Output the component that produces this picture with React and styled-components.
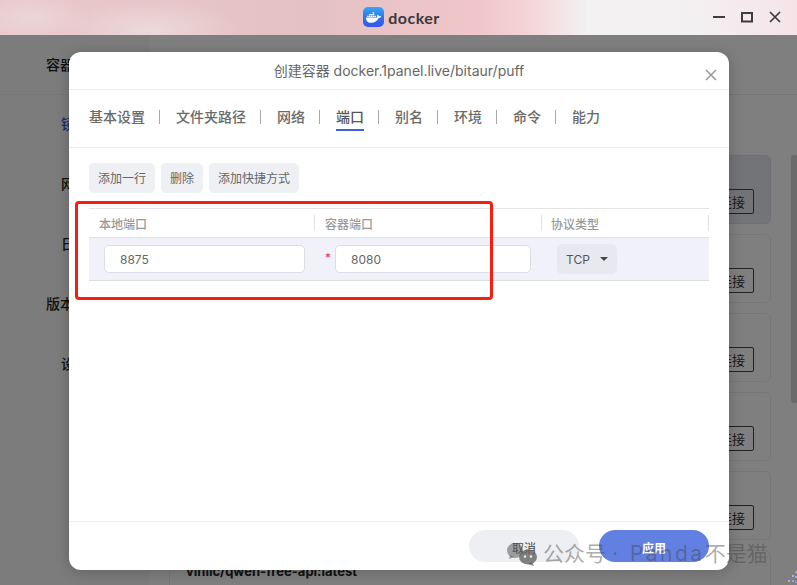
import React from "react";
import styled, { createGlobalStyle } from "styled-components";
import { FaDocker } from "react-icons/fa";

const FONT = `"Inter", "Noto Sans CJK SC", "Noto Sans", sans-serif`;

const Global = createGlobalStyle`
  html, body { margin: 0; padding: 0; background: #fff; }
  * { box-sizing: border-box; }
  body { font-family: ${FONT}; }
`;

const Screen = styled.div`
  position: relative;
  width: 797px;
  height: 585px;
  overflow: hidden;
  display: flex;
  flex-direction: column;
`;

const TitleBar = styled.header`
  height: 35px;
  flex: none;
  display: flex;
  align-items: center;
  justify-content: center;
  position: relative;
  padding-left: 6px;
  gap: 4px;
  background:
    radial-gradient(ellipse 90px 30px at 150px 30px, #ecd9db 0%, rgba(236,217,219,0) 100%),
    radial-gradient(ellipse 60px 24px at 30px 18px, #ecd6d8 0%, rgba(236,214,216,0) 100%),
    linear-gradient(90deg, #e9c8cb 0%, #e4c2c4 40%, #f0c6ca 60%, #f4d3d6 66%, #f3f2f3 74%, #f3f0f1 88%, #f5e3e8 100%);
`;

const LogoTile = styled.span`
  width: 21px;
  height: 20px;
  border-radius: 5px;
  display: flex;
  align-items: center;
  justify-content: center;
  color: #fff;
  font-size: 15px;
  margin-top: -1px;
  background: linear-gradient(180deg, #35a8f4 0%, #2f6df0 60%, #3a55ea 100%);
`;

const AppName = styled.span`
  font-family: "Lato", "Noto Sans", sans-serif;
  font-size: 16px;
  font-weight: 700;
  letter-spacing: 0.5px;
  color: #3a3a3c;
`;

const WindowControls = styled.div`
  position: absolute;
  top: 11px;
  right: 16px;
  display: flex;
  gap: 16px;
  color: #3d3d3d;
  svg { display: block; }
`;

const Main = styled.div`
  flex: 1;
  display: flex;
  min-height: 0;
  background: #fff;
`;

const Sidebar = styled.nav`
  width: 149px;
  flex: none;
  background: #f6f8f6;
`;

const SideItem = styled.div`
  height: 60px;
  display: flex;
  align-items: center;
  padding: 0 0 ${(p) => (p.$rule ? 2 : 4)}px ${(p) => (p.$group ? 46 : 61)}px;
  font-size: 14px;
  font-weight: 500;
  color: ${(p) => (p.$active ? "#3a55dd" : "#222")};
  border-bottom: ${(p) => (p.$rule ? "1px solid #f0f0f0" : "none")};
`;

const Content = styled.section`
  flex: 1;
  min-width: 0;
  position: relative;
`;

const ContentHead = styled.div`
  height: 60px;
  border-bottom: 1px solid #ededed;
`;

const CardList = styled.div`
  display: flex;
  flex-direction: column;
  gap: 10px;
  padding: 60px 26px 0 20px;
`;

const Card = styled.div`
  height: 69px;
  flex: none;
  border: 1px solid ${(p) => (p.$selected ? "#dcdfe9" : "#ececec")};
  border-radius: 6px;
  background: ${(p) => (p.$selected ? "#e6e8f0" : "#fff")};
  padding: 12px 16px;
  position: relative;
  font-size: 13px;
  font-weight: 700;
  color: #222;
`;

const ConnectButton = styled.span`
  position: absolute;
  top: 33px;
  right: 16px;
  width: 60px;
  height: 25px;
  border: 1px solid #444;
  border-radius: 2px;
  font-size: 13px;
  font-weight: 400;
  color: #333;
  display: flex;
  align-items: center;
  justify-content: flex-end;
  padding-right: 8px;
`;

const ScrollThumb = styled.div`
  position: absolute;
  top: 120px;
  right: 0;
  width: 6px;
  height: 248px;
  border-radius: 3px 0 0 3px;
  background: #d6d6d6;
`;

const Overlay = styled.div`
  position: absolute;
  inset: 35px 0 0 0;
  background: rgba(0, 0, 0, 0.5);
  padding: 17px 0 0 69px;
`;

const Modal = styled.div`
  width: 660px;
  height: 518px;
  background: #fff;
  border-radius: 12px;
  box-shadow: 0 2px 14px rgba(0, 0, 0, 0.22);
  display: flex;
  flex-direction: column;
  position: relative;
`;

const ModalHead = styled.div`
  height: 38px;
  flex: none;
  border-bottom: 1px solid #ececee;
  display: flex;
  align-items: center;
  justify-content: center;
  padding-bottom: 2px;
  font-size: 14px;
  color: #666;
  position: relative;
`;

const CloseGlyph = styled.svg`
  position: absolute;
  top: 17px;
  right: 12px;
  width: 12px;
  height: 12px;
`;

const Tabs = styled.div`
  height: 58px;
  flex: none;
  border-bottom: 1px solid #ececee;
  display: flex;
  align-items: center;
  padding: 0 0 4px 20px;
`;

const Tab = styled.div`
  position: relative;
  font-size: 14px;
  font-weight: 500;
  line-height: 20px;
  color: ${(p) => (p.$active ? "#555" : "#6a6a6a")};
  padding-right: 15px;
  margin-right: 16px;
  &:last-child { padding-right: 0; margin-right: 0; }
  &:not(:last-child)::after {
    content: "";
    position: absolute;
    right: 0;
    top: 3px;
    width: 1px;
    height: 14px;
    background: #a8a8a8;
  }
`;

const TabLine = styled.span`
  position: absolute;
  left: 0;
  right: 15px;
  bottom: -4px;
  height: 2px;
  background: #3f5fe8;
`;

const Body = styled.div`
  flex: 1;
  padding: 15px 20px 0;
  min-height: 0;
`;

const Toolbar = styled.div`
  display: flex;
  gap: 6px;
  margin-bottom: 15px;
`;

const ToolButton = styled.div`
  height: 30px;
  padding: 0 9px 1px;
  border-radius: 5px;
  background: #eff0f3;
  color: #666;
  font-size: 12px;
  display: flex;
  align-items: center;
`;

const Row = styled.div`
  display: grid;
  grid-template-columns: 226px 227px 167px;
  width: 620px;
`;

const HeadRow = styled(Row)`
  height: 30px;
  border-top: 1px solid #e4e4e8;
  border-bottom: 1px solid #dfe0e6;
`;

const HeadCell = styled.div`
  position: relative;
  padding-left: 10px;
  font-size: 12px;
  font-weight: 500;
  color: #999;
  display: flex;
  align-items: center;
  &:last-child { padding-left: 9px; }
  &::after {
    content: "";
    position: absolute;
    right: 0;
    top: 6px;
    width: 1px;
    height: 16px;
    background: #e2e2e6;
  }
`;

const DataRow = styled(Row)`
  height: 43px;
  background: #f1f2f9;
  border-bottom: 1px solid #dcdde3;
  align-items: center;
`;

const FieldCell = styled.div`
  display: flex;
  align-items: center;
  padding-left: ${(p) => p.$left}px;
  padding-right: ${(p) => p.$right}px;
  position: relative;
`;

const Required = styled.span`
  position: absolute;
  left: 10px;
  top: 5px;
  color: #f0353d;
  font-size: 12px;
`;

const Field = styled.div`
  flex: 1;
  height: 28px;
  background: #fff;
  border: 1px solid #dcdde6;
  border-radius: 5px;
  padding: 1px 0 0 15px;
  font-size: 12px;
  color: #666;
  display: flex;
  align-items: center;
`;

const Select = styled.div`
  width: 60px;
  height: 30px;
  margin-left: 15px;
  border-radius: 5px;
  background: #e8e9ef;
  font-size: 12px;
  color: #555;
  display: flex;
  align-items: center;
  padding-left: 9px;
  gap: 10px;
`;

const Caret = styled.span`
  width: 0;
  height: 0;
  border-left: 4px solid transparent;
  border-right: 4px solid transparent;
  border-top: 4px solid #444;
`;

const Footer = styled.div`
  height: 49px;
  flex: none;
  border-top: 1px solid #f0f0f2;
  display: flex;
  justify-content: flex-end;
  gap: 20px;
  padding: 8px 20px 0 0;
`;

const FooterButton = styled.div`
  width: 110px;
  height: 32px;
  border-radius: 16px;
  background: ${(p) => (p.$primary ? "#6280e2" : "#eeeff3")};
  color: ${(p) => (p.$primary ? "#fff" : "#444")};
  font-size: 12px;
  font-weight: ${(p) => (p.$primary ? 700 : 400)};
  display: flex;
  align-items: center;
  justify-content: center;
  padding-top: 3px;
`;

const RedBox = styled.div`
  position: absolute;
  left: 75px;
  top: 201px;
  width: 418px;
  height: 99px;
  border: 3px solid #fb1c10;
  border-radius: 4px;
  pointer-events: none;
`;

const Watermark = styled.div`
  position: absolute;
  left: 507px;
  top: 541px;
  display: flex;
  align-items: center;
  gap: 6px;
  pointer-events: none;
  color: rgba(70, 70, 70, 0.45);
  font-size: 21px;
  line-height: 26px;
  white-space: nowrap;
`;

const WatermarkLatin = styled.span`
  letter-spacing: 2.5px;
  margin-left: 6px;
`;

const WatermarkIcon = styled.svg`
  width: 30px;
  height: 24px;
  flex: none;
`;

const CornerDots = styled.svg`
  position: absolute;
  right: 0;
  bottom: 0;
  width: 10px;
  height: 14px;
`;

const tabs = ["基本设置", "文件夹路径", "网络", "端口", "别名", "环境", "命令", "能力"];
const sideItems = [
  { label: "容器管理", group: true, rule: true },
  { label: "镜像", active: true },
  { label: "网络" },
  { label: "日志" },
  { label: "版本管理", group: true },
  { label: "设置" },
];

export default function App() {
  return (
    <Screen>
      <Global />
      <TitleBar>
        <LogoTile><FaDocker /></LogoTile>
        <AppName>docker</AppName>
        <WindowControls>
          <svg width="12" height="12" viewBox="0 0 12 12"><path d="M0 6h12" stroke="currentColor" strokeWidth="2" /></svg>
          <svg width="12" height="12" viewBox="0 0 12 12"><path d="M1 2h10v8.500H1z" fill="none" stroke="currentColor" strokeWidth="2" /></svg>
          <svg width="12" height="12" viewBox="0 0 12 12"><path d="M1 1l10 10M11 1L1 11" stroke="currentColor" strokeWidth="1.700" /></svg>
        </WindowControls>
      </TitleBar>
      <Main>
        <Sidebar>
          {sideItems.map((s) => (
            <SideItem key={s.label} $group={s.group} $active={s.active} $rule={s.rule}>{s.label}</SideItem>
          ))}
        </Sidebar>
        <Content>
          <ContentHead />
          <CardList>
            <Card $selected><ConnectButton>连接</ConnectButton></Card>
            <Card><ConnectButton>连接</ConnectButton></Card>
            <Card><ConnectButton>连接</ConnectButton></Card>
            <Card><ConnectButton>连接</ConnectButton></Card>
            <Card><ConnectButton>连接</ConnectButton></Card>
            <Card>vinlic/qwen-free-api:latest</Card>
          </CardList>
          <ScrollThumb />
        </Content>
      </Main>
      <Overlay>
        <Modal>
          <ModalHead>
            创建容器 docker.1panel.live/bitaur/puff
            <CloseGlyph viewBox="0 0 12 12"><path d="M1 1l10 10M11 1L1 11" stroke="#999" strokeWidth="1.500" /></CloseGlyph>
          </ModalHead>
          <Tabs>
            {tabs.map((t) => (
              <Tab key={t} $active={t === "端口"}>
                {t}
                {t === "端口" && <TabLine />}
              </Tab>
            ))}
          </Tabs>
          <Body>
            <Toolbar>
              <ToolButton>添加一行</ToolButton>
              <ToolButton>删除</ToolButton>
              <ToolButton>添加快捷方式</ToolButton>
            </Toolbar>
            <HeadRow>
              <HeadCell>本地端口</HeadCell>
              <HeadCell>容器端口</HeadCell>
              <HeadCell>协议类型</HeadCell>
            </HeadRow>
            <DataRow>
              <FieldCell $left={15} $right={10}><Field>8875</Field></FieldCell>
              <FieldCell $left={20} $right={11}><Required>*</Required><Field>8080</Field></FieldCell>
              <FieldCell $left={0} $right={0}><Select>TCP<Caret /></Select></FieldCell>
            </DataRow>
          </Body>
          <Footer>
            <FooterButton>取消</FooterButton>
            <FooterButton $primary>应用</FooterButton>
          </Footer>
        </Modal>
      </Overlay>
      <RedBox />
      <Watermark>
        <WatermarkIcon viewBox="0 0 30 24">
          <ellipse cx="8" cy="8.500" rx="8" ry="7.500" fill="#5a5a5a" fillOpacity="0.55" />
          <path d="M3 13l-1 4 5-2z" fill="#5a5a5a" fillOpacity="0.55" />
          <ellipse cx="21" cy="15" rx="9" ry="7.500" fill="#5a5a5a" fillOpacity="0.75" />
          <path d="M25 20l2 4-6-2z" fill="#5a5a5a" fillOpacity="0.75" />
          <circle cx="18" cy="14.500" r="1.200" fill="#eee" />
          <circle cx="24" cy="14.500" r="1.200" fill="#eee" />
        </WatermarkIcon>
        <span>公众号 · <WatermarkLatin>Panda</WatermarkLatin>不是猫</span>
      </Watermark>
      <CornerDots viewBox="0 0 10 14">
        <rect x="8" y="0" width="2" height="2" fill="#9aa6e0" />
        <rect x="5" y="4" width="2" height="2" fill="#b0b6e0" />
        <rect x="8" y="5" width="2" height="2" fill="#9aa6e0" />
        <rect x="1" y="9" width="2" height="2" fill="#a8b0e0" />
        <rect x="5" y="9" width="2" height="2" fill="#9aa6e0" />
        <rect x="8" y="10" width="2" height="2" fill="#8a98e0" />
      </CornerDots>
    </Screen>
  );
}
